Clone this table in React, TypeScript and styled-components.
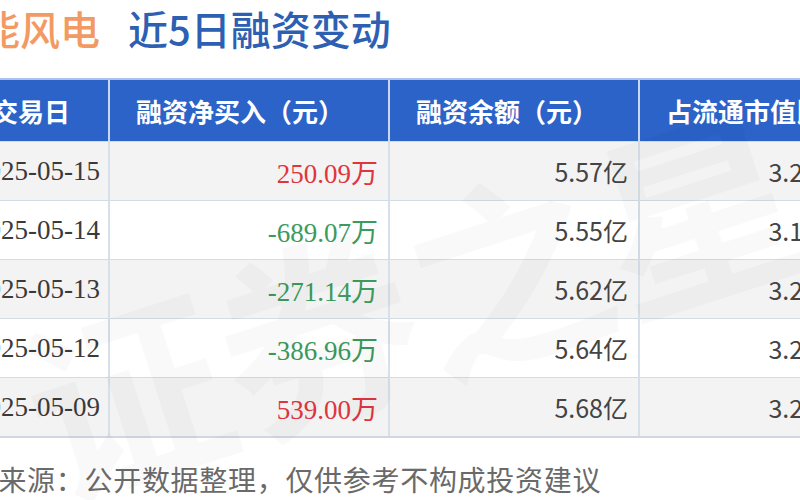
import React from 'react';
import styled, { createGlobalStyle } from 'styled-components';

interface Row {
    date: string;
    net: string;
    balance: string;
    ratio: string;
}

const GlobalStyle = createGlobalStyle`
    html, body {
        margin: 0;
        padding: 0;
        background: #ffffff;
        overflow: hidden;
    }
`;

const Page = styled.div`
    position: relative;
    width: 800px;
    height: 500px;
    overflow: hidden;
    background: #ffffff;
    font-family: 'Noto Sans CJK SC', 'Noto Sans', sans-serif;
`;

const Title = styled.div`
    display: flex;
    gap: 28px;
    height: 56px;
    line-height: 56px;
    margin-left: -60px;
    font-size: 40px;
    font-weight: 500;
    white-space: nowrap;
`;

const TitleName = styled.span`
    color: #f29a62;
`;

const TitleMain = styled.span`
    color: #2d5fb3;
`;

const Table = styled.div`
    display: grid;
    grid-template-columns: 144px 280px 250px 210px;
    width: 884px;
    margin-top: 22px;
    margin-left: -34px;
    border-top: 2px solid #a9c1ec;
    border-bottom: 2px solid #cfd8e2;
`;

const HeadCell = styled.div<{ last?: boolean }>`
    height: 61px;
    display: flex;
    align-items: center;
    padding-left: 26px;
    background: #2b63c9;
    color: #ffffff;
    font-size: 26px;
    font-weight: 700;
    white-space: nowrap;
    overflow: hidden;
    border-right: ${({ last }) => (last ? 'none' : '2px solid #c9d7f0')};
`;

const Cell = styled.div<{ shade: boolean; align: 'left' | 'right'; last?: boolean }>`
    height: 58px;
    display: flex;
    align-items: center;
    justify-content: ${({ align }) => (align === 'left' ? 'flex-start' : 'flex-end')};
    padding: ${({ align }) => (align === 'left' ? '0 0 0 8px' : '0 10px 0 0')};
    background: ${({ shade }) => (shade ? '#f3f3f3' : '#ffffff')};
    border-top: 1px solid #d3dbe3;
    border-right: ${({ last }) => (last ? 'none' : '2px solid #d6e0ea')};
    white-space: nowrap;
`;

const SerifText = styled.span<{ tone?: 'up' | 'down' }>`
    font-family: 'Liberation Serif', 'Noto Sans CJK SC', serif;
    font-size: 27px;
    color: ${({ tone }) =>
        tone === 'up' ? '#e0353d' : tone === 'down' ? '#3b9a5c' : '#3a3a3a'};
`;

const SansText = styled.span`
    font-family: 'Noto Sans CJK SC', sans-serif;
    font-size: 25px;
    color: #444444;
`;

const Footer = styled.div`
    margin-top: 21px;
    margin-left: -59px;
    font-size: 28px;
    letter-spacing: 0.7px;
    line-height: 40px;
    color: #6a6a6a;
    white-space: nowrap;
`;

const Watermark = styled.div`
    position: absolute;
    left: 10px;
    top: 150px;
    font-size: 200px;
    font-weight: 700;
    color: rgba(0, 0, 0, 0.025);
    transform: rotate(-18deg);
    white-space: nowrap;
    pointer-events: none;
`;

const rows: Row[] = [
    { date: '2025-05-15', net: '250.09万', balance: '5.57亿', ratio: '3.25%' },
    { date: '2025-05-14', net: '-689.07万', balance: '5.55亿', ratio: '3.15%' },
    { date: '2025-05-13', net: '-271.14万', balance: '5.62亿', ratio: '3.22%' },
    { date: '2025-05-12', net: '-386.96万', balance: '5.64亿', ratio: '3.23%' },
    { date: '2025-05-09', net: '539.00万', balance: '5.68亿', ratio: '3.26%' },
];

export default function App() {
    return (
        <Page>
            <GlobalStyle />
            <Title>
                <TitleName>节能风电</TitleName>
                <TitleMain>近5日融资变动</TitleMain>
            </Title>
            <Table>
                <HeadCell>交易日</HeadCell>
                <HeadCell>融资净买入（元）</HeadCell>
                <HeadCell>融资余额（元）</HeadCell>
                <HeadCell last>占流通市值比</HeadCell>
                {rows.map((row, i) => {
                    const shade = i % 2 === 0;
                    const tone = row.net.startsWith('-') ? 'down' : 'up';
                    return (
                        <React.Fragment key={row.date}>
                            <Cell shade={shade} align="left">
                                <SerifText>{row.date}</SerifText>
                            </Cell>
                            <Cell shade={shade} align="right">
                                <SerifText tone={tone}>{row.net}</SerifText>
                            </Cell>
                            <Cell shade={shade} align="right">
                                <SansText>{row.balance}</SansText>
                            </Cell>
                            <Cell shade={shade} align="right" last>
                                <SansText>{row.ratio}</SansText>
                            </Cell>
                        </React.Fragment>
                    );
                })}
            </Table>
            <Footer>数据来源：公开数据整理，仅供参考不构成投资建议</Footer>
            <Watermark>证券之星</Watermark>
        </Page>
    );
}
